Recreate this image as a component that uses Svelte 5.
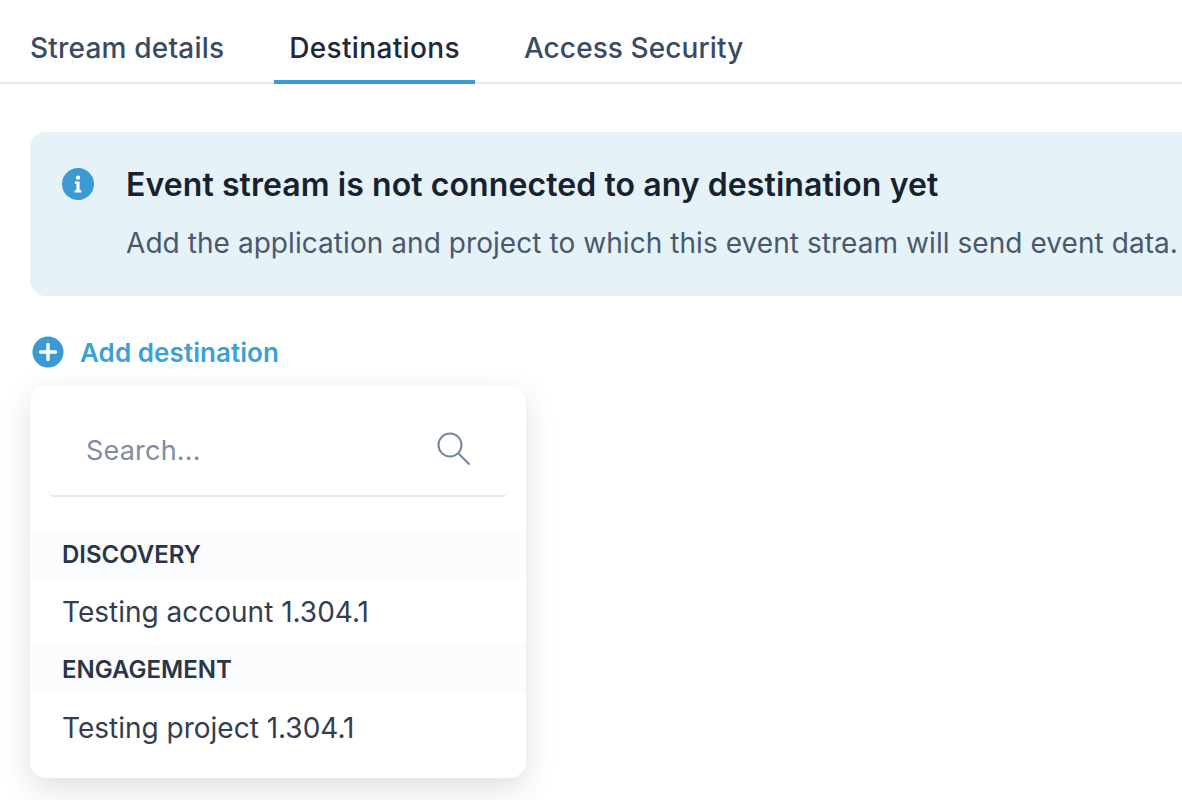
<script>
	let groups = [
		{ name: "DISCOVERY", item: "Testing account 1.304.1" },
		{ name: "ENGAGEMENT", item: "Testing project 1.304.1" },
	];
	let tabs = ["Stream details", "Destinations", "Access Security"];
	let active = 1;
</script>

<main>
	<nav class="tabs">
		{#each tabs as tab, i}
			<div class="tab" class:active={i === active}>{tab}</div>
		{/each}
	</nav>

	<section class="content">
		<div class="banner">
			<svg class="info" width="32" height="32" viewBox="0 0 32 32">
				<circle cx="16" cy="16" r="16" fill="#3b9ad2" />
				<circle cx="16" cy="9.6" r="2.2" fill="#fff" />
				<path d="M12.8 13.6h4.8v8.6h1.8v2.2h-6.8v-2.2h1.8v-6.4h-1.6z" fill="#fff" />
			</svg>
			<div class="copy">
				<h2>Event stream is not connected to any destination yet</h2>
				<p>Add the application and project to which this event stream will send event data.</p>
			</div>
		</div>

		<div class="add">
			<svg width="32" height="32" viewBox="0 0 32 32">
				<circle cx="16" cy="16" r="15.5" fill="#3b9ad2" />
				<path d="M16 8.5v15M8.5 16h15" stroke="#fff" stroke-width="3.4" stroke-linecap="round" />
			</svg>
			<span>Add destination</span>
		</div>

		<div class="dropdown">
			<div class="search">
				<span>Search...</span>
				<svg width="34" height="34" viewBox="0 0 34 34" fill="none" stroke="#7484a1" stroke-width="2">
					<circle cx="13" cy="13" r="11.5" />
					<path d="M21.5 21.5l10.5 10.5" stroke-linecap="round" />
				</svg>
			</div>
			{#each groups as g}
				<div class="group">{g.name}</div>
				<div class="item">{g.item}</div>
			{/each}
		</div>
	</section>
</main>

<style>
	:global(body) {
		margin: 0;
		background: #fff;
	}
	main {
		width: 1182px;
		height: 800px;
		overflow: hidden;
		font-family: Inter, "Liberation Sans", sans-serif;
		color: #1e2a3a;
	}
	.tabs {
		display: flex;
		gap: 35px;
		height: 82px;
		padding-left: 15px;
		border-bottom: 2px solid #e4e9f4;
	}
	.tab {
		height: 84px;
		box-sizing: border-box;
		padding: 12px 15px 0;
		display: flex;
		align-items: center;
		font-size: 28px;
		letter-spacing: 0.2px;
		font-weight: 500;
		color: #3b4a63;
	}
	.tab:last-child {
		margin-left: -1px;
		letter-spacing: 0.1px;
	}
	.tab.active {
		color: #1c2a3b;
		letter-spacing: 0.35px;
		border-bottom: 4px solid #3b9ad2;
		padding-top: 16px;
	}
	.content {
		padding: 48px 0 0 30px;
	}
	.banner {
		width: 1300px;
		height: 164px;
		box-sizing: border-box;
		display: flex;
		gap: 32px;
		padding: 36px 32px;
		background: #e5f2f8;
		border-radius: 16px;
	}
	.info {
		flex: none;
	}
	h2 {
		margin: 0;
		font-size: 32px;
		line-height: 34px;
		letter-spacing: 0.08px;
		font-weight: 600;
		color: #18222f;
	}
	.banner p {
		margin: 24px 0 0;
		font-size: 28px;
		line-height: 34px;
		letter-spacing: 0.06px;
		color: #4a586e;
		white-space: nowrap;
	}
	.add {
		display: flex;
		align-items: center;
		gap: 16px;
		margin: 39px 0 17px 2px;
		height: 34px;
		font-size: 26px;
		letter-spacing: 0.07px;
		font-weight: 600;
		color: #3aa1d8;
	}
	.dropdown {
		width: 496px;
		height: 392px;
		box-sizing: border-box;
		padding-top: 16px;
		background: #fff;
		border-radius: 16px;
		box-shadow: 0 10px 30px rgba(30, 42, 58, 0.15);
	}
	.search {
		display: flex;
		justify-content: space-between;
		align-items: center;
		height: 95px;
		box-sizing: border-box;
		margin: 0 18px;
		padding: 0 37px 0 38px;
		border-bottom: 2px solid #e4e9f4;
		border-radius: 0 0 6px 6px;
		font-size: 27px;
		letter-spacing: 0.2px;
		color: #7f8ca6;
	}
	.search span {
		padding-top: 4px;
	}
	.group {
		margin-top: 33px;
		height: 48px;
		padding-left: 32px;
		display: flex;
		align-items: center;
		background: #fbfcfe;
		font-size: 24px;
		font-weight: 600;
		color: #2a3547;
	}
	.group + .item + .group {
		margin-top: 0;
	}
	.item {
		height: 67px;
		padding-left: 32px;
		display: flex;
		align-items: center;
		font-size: 28px;
		color: #333d4f;
	}
	.item:last-child {
		padding-top: 3px;
		height: 64px;
	}
</style>
